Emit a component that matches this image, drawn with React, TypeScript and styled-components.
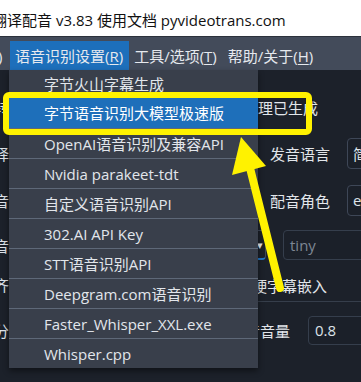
import React from 'react';
import styled, { createGlobalStyle } from 'styled-components';

const FONT = `"Open Sans", "Noto Sans CJK SC", sans-serif`;

const GlobalStyle = createGlobalStyle`
  html, body {
    margin: 0;
    padding: 0;
    background: #1c212a;
  }
  body {
    font-family: ${FONT};
  }
`;

const MENU_ITEMS = [
  '字节火山字幕生成',
  '字节语音识别大模型极速版',
  'OpenAI语音识别及兼容API',
  'Nvidia parakeet-tdt',
  '自定义语音识别API',
  '302.AI API Key',
  'STT语音识别API',
  'Deepgram.com语音识别',
  'Faster_Whisper_XXL.exe',
  'Whisper.cpp',
];

const App: React.FC = () => {
  return (
    <Window>
      <GlobalStyle />
      <TitleBar>
        <TitleText>翻译配音 v3.83 使用文档 pyvideotrans.com</TitleText>
      </TitleBar>

      <MenuBar>
        <MenuCut>)</MenuCut>
        <MenuItem $active>语音识别设置(<u>R</u>)</MenuItem>
        <MenuItem>工具/选项(<u>T</u>)</MenuItem>
        <MenuItem>帮助/关于(<u>H</u>)</MenuItem>
      </MenuBar>

      <Body>
        <Row $h={46}>
          <EdgeLabel>转</EdgeLabel>
          <Text $ml={234}>处理已生成</Text>
        </Row>
        <Row $h={46}>
          <EdgeLabel>择</EdgeLabel>
          <Text $ml={261}>发音语言</Text>
          <Combo $ml={17}>简体中文</Combo>
        </Row>
        <Row $h={48}>
          <EdgeLabel>音</EdgeLabel>
          <Text $ml={261}>配音角色</Text>
          <Combo $ml={17}>en-US-AriaNeural</Combo>
        </Row>
        <Row $h={42}>
          <EdgeLabel>音</EdgeLabel>
          <FocusCombo $ml={171}>
            <Caret>▾</Caret>
          </FocusCombo>
          <Input $ml={17} $muted>tiny</Input>
        </Row>
        <Row $h={36}>
          <EdgeLabel>齐</EdgeLabel>
          <DividedCell $ml={228}>
            <Text>硬字幕嵌入</Text>
          </DividedCell>
        </Row>
        <Row $h={56}>
          <EdgeLabel>分</EdgeLabel>
          <Text $ml={221}>配音音量</Text>
          <Input $ml={18} $h={27}>0.8</Input>
        </Row>
      </Body>

      <Dropdown>
        {MENU_ITEMS.map((label, i) => (
          <DropItem key={label} $active={i === 1} $first={i === 0} $last={i === MENU_ITEMS.length - 1}>
            {label}
          </DropItem>
        ))}
      </Dropdown>

      <Annotation width="361" height="382" viewBox="0 0 361 382">
        <rect x="6" y="95" width="303" height="37" rx="3" fill="none" stroke="#fff200" strokeWidth="6" />
        <line x1="280" y1="288" x2="250" y2="168" stroke="#fff200" strokeWidth="8" strokeLinecap="round" />
        <polygon points="241,137 266,166 232,175" fill="#fff200" />
      </Annotation>
    </Window>
  );
};

const Window = styled.div`
  position: relative;
  width: 361px;
  height: 382px;
  overflow: hidden;
  display: flex;
  flex-direction: column;
  background: #1c212a;
`;

const TitleBar = styled.div`
  height: 36px;
  flex-shrink: 0;
  background: #ffffff;
  border-bottom: 1px solid #2b313b;
  display: flex;
  align-items: center;
  overflow: hidden;
`;

const TitleText = styled.span`
  margin-left: -8px;
  margin-top: 2px;
  font-size: 15px;
  color: #111;
  white-space: nowrap;
`;

const MenuBar = styled.div`
  height: 29px;
  flex-shrink: 0;
  padding-top: 4px;
  background: #434b5a;
  display: flex;
  align-items: stretch;
`;

const MenuCut = styled.span`
  margin-left: -2px;
  width: 12px;
  display: flex;
  align-items: center;
  font-size: 15px;
  color: #e6e9ee;
`;

const MenuItem = styled.div<{ $active?: boolean }>`
  display: flex;
  align-items: center;
  padding: 0 6px 0 5px;
  font-size: 15px;
  color: #e6e9ee;
  white-space: nowrap;
  background: ${(p) => (p.$active ? '#1d6fbb' : 'transparent')};

  & u {
    text-underline-offset: 2px;
  }
`;

const Body = styled.div`
  flex: 1;
  padding-top: 14px;
  display: flex;
  flex-direction: column;
  overflow: hidden;
`;

const Row = styled.div<{ $h: number }>`
  height: ${(p) => p.$h}px;
  flex-shrink: 0;
  display: flex;
  align-items: center;
  white-space: nowrap;
`;

const EdgeLabel = styled.span`
  margin-left: -6px;
  width: 15px;
  flex-shrink: 0;
  font-size: 15px;
  color: #dfe3e9;
`;

const Text = styled.span<{ $ml?: number }>`
  margin-left: ${(p) => p.$ml ?? 0}px;
  flex-shrink: 0;
  font-size: 15px;
  color: #e2e6eb;
`;

const Combo = styled.div<{ $ml: number }>`
  margin-left: ${(p) => p.$ml}px;
  flex-shrink: 0;
  width: 120px;
  height: 29px;
  padding-left: 5px;
  display: flex;
  align-items: center;
  border: 1px solid #3e4757;
  border-radius: 4px;
  background: #1b2029;
  font-size: 15px;
  color: #dfe3e9;
`;

const FocusCombo = styled.div<{ $ml: number }>`
  margin-left: ${(p) => p.$ml}px;
  flex-shrink: 0;
  width: 82px;
  height: 27px;
  display: flex;
  align-items: center;
  justify-content: flex-end;
  padding-right: 2px;
  border: 1px solid #3e4757;
  border-bottom: 2px solid #1f74c4;
  border-radius: 4px;
  background: #1b2029;
`;

const Caret = styled.span`
  font-size: 11px;
  color: #e6e9ee;
`;

const Input = styled.div<{ $ml: number; $h?: number; $muted?: boolean }>`
  margin-left: ${(p) => p.$ml}px;
  flex-shrink: 0;
  width: 110px;
  height: ${(p) => p.$h ?? 28}px;
  padding-left: 6px;
  display: flex;
  align-items: center;
  border: 1px solid #353e4c;
  border-radius: 4px;
  background: #1b2029;
  font-size: 15px;
  color: ${(p) => (p.$muted ? '#7d8693' : '#dde2e8')};
`;

const DividedCell = styled.div<{ $ml: number }>`
  margin-left: ${(p) => p.$ml}px;
  flex: 1;
  align-self: stretch;
  display: flex;
  align-items: center;
  padding-left: 15px;
  padding-top: 3px;
  border-bottom: 1px solid #363e4b;
`;

const Dropdown = styled.div`
  position: absolute;
  top: 70px;
  left: 9px;
  width: 249px;
  background: #393f4b;
  box-shadow: 0 3px 6px rgba(0, 0, 0, 0.45);
  display: flex;
  flex-direction: column;
`;

const DropItem = styled.div<{ $active?: boolean; $first?: boolean; $last?: boolean }>`
  height: ${(p) => (p.$first ? 26 : p.$active ? 32 : 29)}px;
  padding-left: 35px;
  display: flex;
  align-items: center;
  font-size: 15px;
  white-space: nowrap;
  color: ${(p) => (p.$active ? '#ffffff' : '#e2e6eb')};
  background: ${(p) => (p.$active ? '#1e6fba' : 'transparent')};
  border-bottom: ${(p) => (p.$last || p.$first ? 'none' : '1px solid #5e6878')};
`;

const Annotation = styled.svg`
  position: absolute;
  top: 0;
  left: 0;
  pointer-events: none;
`;

export default App;
